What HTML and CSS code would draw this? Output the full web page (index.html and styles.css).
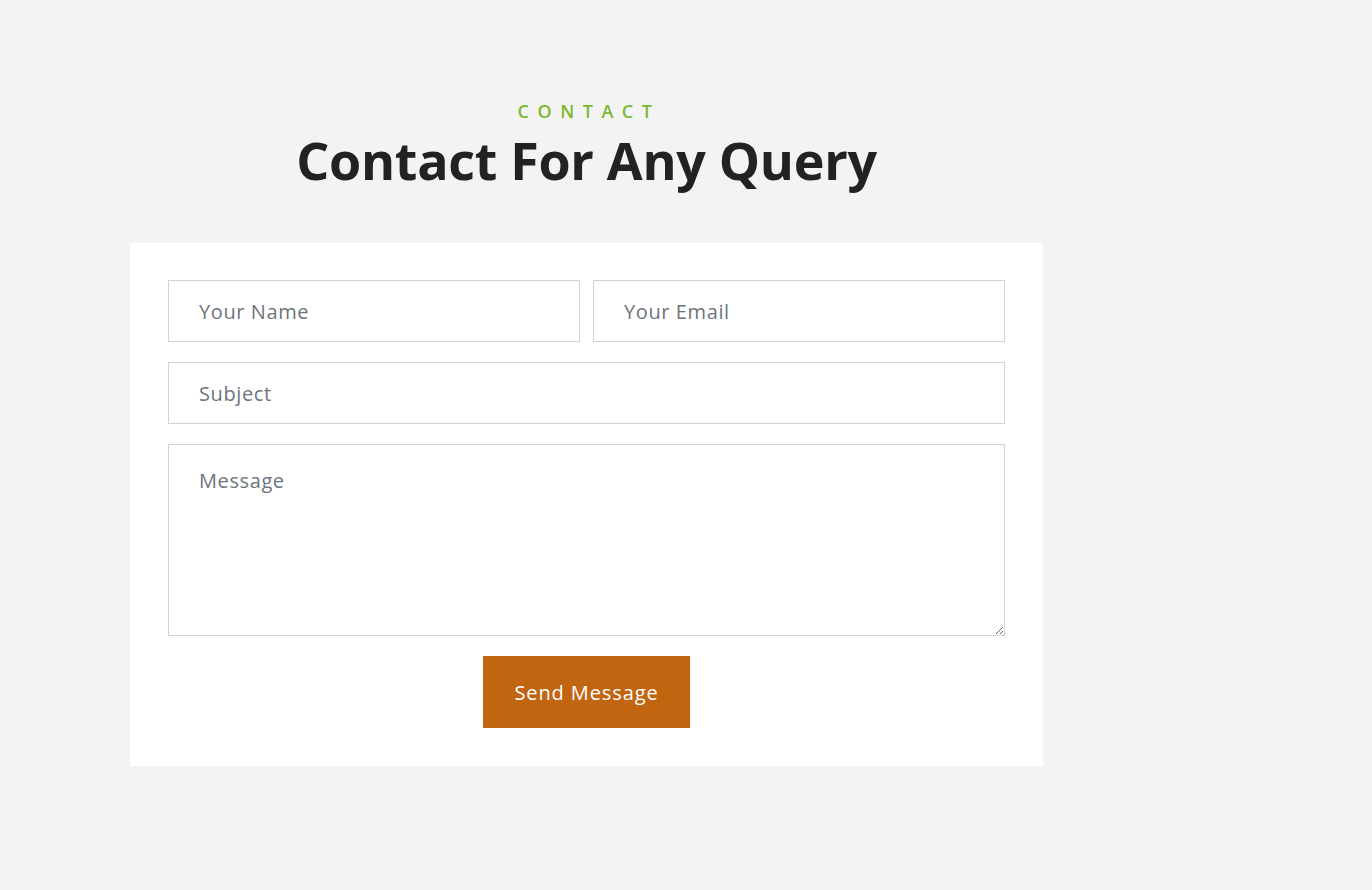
FILE: index.html
```html
<!DOCTYPE html>
<html lang="en">
<head>
<meta charset="utf-8">
<title>Contact</title>
<link rel="stylesheet" href="styles.css">
</head>
<body>
<section class="contact">
  <div class="contact-inner">
    <header class="section-title">
      <p class="eyebrow">CONTACT</p>
      <h1 class="heading">Contact For Any Query</h1>
    </header>
    <form class="card">
      <div class="row two">
        <input class="field" type="text" placeholder="Your Name">
        <input class="field" type="email" placeholder="Your Email">
      </div>
      <div class="row">
        <input class="field" type="text" placeholder="Subject">
      </div>
      <div class="row">
        <textarea class="field area" placeholder="Message"></textarea>
      </div>
      <div class="actions">
        <button class="btn" type="button">Send Message</button>
      </div>
    </form>
  </div>
</section>
</body>
</html>
```

FILE: styles.css
```css
* { box-sizing: border-box; }
html, body { margin: 0; padding: 0; }
body {
  background: #f3f3f3;
  font-family: "Open Sans", "Liberation Sans", sans-serif;
  width: 1372px;
  height: 890px;
  overflow: hidden;
}
.contact {
  padding: 98px 0 0 130px;
}
.contact-inner {
  width: 913px;
}
.section-title {
  text-align: center;
}
.eyebrow {
  margin: 0;
  padding-left: 5px;
  color: #7cb82f;
  font-size: 18px;
  letter-spacing: 8.5px;
  line-height: 26px;
  font-weight: 600;
}
.heading {
  margin: 5px 0 0;
  color: #222222;
  font-size: 52px;
  font-weight: 700;
  line-height: 62px;
  letter-spacing: -0.3px;
}
.card {
  margin-top: 52px;
  background: #ffffff;
  padding: 37px 38px 38px;
  display: flex;
  flex-direction: column;
  gap: 20px;
}
.row {
  display: flex;
}
.row.two {
  gap: 13px;
}
.field {
  flex: 1;
  height: 62px;
  border: 1px solid #ced4da;
  border-radius: 0;
  background: #fff;
  padding: 0 30px;
  font-family: inherit;
  font-size: 20px;
  letter-spacing: 0.6px;
  color: #495057;
  outline: none;
}
.field::placeholder { color: #6c757d; opacity: 1; }
.area {
  height: 192px;
  padding: 22px 30px;
  resize: vertical;
}
.actions {
  display: flex;
  justify-content: center;
}
.btn {
  width: 207px;
  height: 72px;
  border: 0;
  border-radius: 0;
  background: #c26511;
  color: #ffffff;
  font-family: inherit;
  font-size: 20px;
  letter-spacing: 0.9px;
  cursor: pointer;
}
```
